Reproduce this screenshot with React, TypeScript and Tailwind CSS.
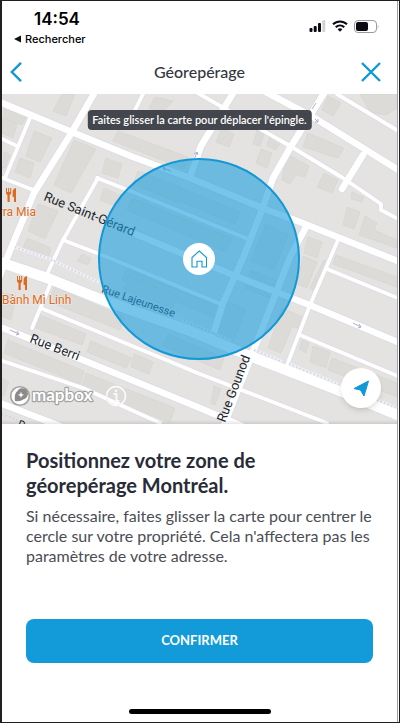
type Building = { points: string };

const minorRoads = [
    'M30 118 L5 178',
    'M0 138 L17 146',
    'M0 177 L36 191',
    'M98 178 L62 242 L48 272',
    'M50 285 L32 328',
    'M97 178 L133 192 L248 239',
    'M63 240 L107 257 L223 305',
    'M143 94 L134 112',
    'M337 94 L400 132',
    'M196 92 L290 146 L343 178 L381 204 L381 210 L400 220',
    'M338 240 L310 305 L287 365',
    'M327 269 L400 299',
    'M300 335 L400 377',
    'M43 309 L200 374 L327 423',
    'M0 360 L83 388 L160 423',
];

const mainRoads = [
    'M0 102 L67 130 L133 157 L190 178 L262 208 L300 222 L400 262',
    'M96 90 L72 132 L34 193 L7 258 L-4 285',
    'M133 233 L233 275 L312 306 L400 343',
    'M235 90 L201 146 L190 177',
    'M326 90 L290 148 L273 178 L262 210 L243 258 L223 303 L212 338',
    'M262 90 L313 117 L400 171',
    'M363 155 L342 189',
    'M306 227 L290 257 L253 352 L222 430',
    'M0 327 L33 340 L100 367 L200 408 L242 426',
    'M0 403 L60 426',
];

const avenue = 'M0 262 L50 279 L100 299 L190 331 L250 356 L340 391 L400 416';

const buildings: Building[] = [
    { points: '62,94 75,94 66,116 53,111' },
    { points: '14,108 28,113 22,125 4,118 4,108' },
    { points: '34,131 52,138 40,162 26,156' },
    { points: '20,158 34,163 30,178 15,172' },
    { points: '4,152 10,155 5,168 3,168' },
    { points: '2,117 17,124 13,138 2,133' },
    { points: '74,140 96,149 71,193 54,185' },
    { points: '38,204 58,211 45,239 28,231' },
    { points: '27,238 51,248 48,258 22,250' },
    { points: '106,158 122,164 118,178 102,173' },
    { points: '118,131 188,157 184,169 113,141' },
    { points: '104,188 122,196 118,207 100,200' },
    { points: '138,171 182,188 177,202 133,184' },
    { points: '181,188 240,212 235,224 177,200' },
    { points: '132,198 232,238 226,252 127,210' },
    { points: '155,97 173,101 163,112 149,108' },
    { points: '222,128 234,134 229,147 216,142' },
    { points: '258,127 265,132 260,146 253,144' },
    { points: '270,136 281,142 276,150 267,146' },
    { points: '261,149 272,153 267,168 256,163' },
    { points: '328,96 341,103 333,116 322,110' },
    { points: '360,94 397,94 397,108 386,115 370,112' },
    { points: '308,133 344,148 338,158 303,147' },
    { points: '287,154 309,166 305,177 296,175 290,184 282,180' },
    { points: '324,173 338,180 332,193 317,187' },
    { points: '352,192 364,197 362,202 351,199' },
    { points: '347,207 360,212 354,229 343,225' },
    { points: '365,216 377,223 374,230 397,240 397,248 359,235' },
    { points: '308,237 322,242 317,258 304,253' },
    { points: '303,256 317,262 307,288 297,284' },
    { points: '324,260 330,262 316,292 310,288' },
    { points: '336,255 397,277 397,287 333,264' },
    { points: '266,224 288,235 274,270 251,261' },
    { points: '225,300 246,310 232,344 218,335' },
    { points: '251,270 276,280 269,298 245,288' },
    { points: '282,308 303,317 298,328 292,327 281,353 268,348' },
    { points: '126,268 220,307 216,318 122,280' },
    { points: '128,276 178,297 172,308 124,290' },
    { points: '82,254 91,258 88,265 77,261' },
    { points: '0,292 16,296 11,320 0,315' },
    { points: '54,287 124,317 120,330 49,302' },
    { points: '40,315 86,334 82,345 36,328' },
    { points: '91,341 132,358 126,368 87,352' },
    { points: '134,354 153,362 149,374 131,367' },
    { points: '8,340 84,371 80,384 4,353' },
    { points: '86,373 175,408 170,422 80,390' },
    { points: '0,377 9,382 4,396 0,395' },
    { points: '168,334 224,358 220,370 163,346' },
    { points: '214,386 221,389 215,405 211,403' },
    { points: '302,340 309,343 306,353 299,349' },
    { points: '313,346 330,352 326,368 310,362' },
    { points: '332,358 397,383 397,397 328,370' },
];

function StatusBar() {
    return (
        <div className="flex justify-between items-start pl-3 pr-[18px] pt-2">
            <div className="flex flex-col font-['Inter'] text-black">
                <span className="text-[17px] leading-5 font-semibold pl-5">14:54</span>
                <a href="#rechercher" className="flex items-center gap-1 text-[11px] leading-5 font-medium">
                    <svg width="7" height="8" viewBox="0 0 7 8" aria-hidden="true">
                        <path d="M7 0.5 V7.5 L0 4 Z" fill="#111" />
                    </svg>
                    Rechercher
                </a>
            </div>
            <div className="flex items-center gap-[6px] pt-[10px]">
                <svg width="17" height="14" viewBox="0 0 17 14" aria-hidden="true">
                    <rect x="0.5" y="9" width="3" height="4" rx="1" fill="#0b0b14" />
                    <rect x="4.7" y="7" width="3" height="6" rx="1" fill="#0b0b14" />
                    <rect x="9" y="4" width="3" height="9" rx="1" fill="#0b0b14" />
                    <rect x="13.3" y="1" width="3" height="12" rx="1" fill="#d2d2d4" />
                </svg>
                <svg width="16" height="12" viewBox="0 0 16 12" fill="none" stroke="#0b0b14" aria-hidden="true">
                    <path d="M1 4.3 C5 0.4 11 0.4 15 4.3" strokeWidth="2" />
                    <path d="M3.7 7.2 C6.2 4.8 9.8 4.8 12.3 7.2" strokeWidth="2" />
                    <path d="M8 11.8 L5.6 9.3 Q8 7.3 10.4 9.3 Z" fill="#0b0b14" stroke="none" />
                </svg>
                <svg width="25" height="13" viewBox="0 0 25 13" aria-hidden="true">
                    <rect x="0.5" y="0.5" width="22" height="12" rx="3.5" fill="none" stroke="#9a9a9e" />
                    <rect x="2" y="2" width="12" height="9" rx="2" fill="#0b0b14" />
                    <path d="M23.8 4.5 Q25 6.5 23.8 8.5 Z" fill="#9a9a9e" />
                </svg>
            </div>
        </div>
    );
}

function Header() {
    return (
        <header className="grid grid-cols-[1fr_auto_1fr] items-center px-2 h-[45px]">
            <button type="button" aria-label="Retour" className="justify-self-start">
                <svg width="12" height="20" viewBox="0 0 12 20" fill="none" stroke="#1398d6" strokeWidth="2.4">
                    <path d="M11 0.8 L1.8 10 L11 19.2" />
                </svg>
            </button>
            <h1 className="text-[16px] leading-6 font-medium text-[#343741]">Géorepérage</h1>
            <button type="button" aria-label="Fermer" className="justify-self-end pr-2">
                <svg width="20" height="20" viewBox="0 0 20 20" fill="none" stroke="#1398d6" strokeWidth="2.4">
                    <path d="M1 1 L19 19 M19 1 L1 19" />
                </svg>
            </button>
        </header>
    );
}

function Fork({ x, y }: { x: number, y: number }) {
    return (
        <g transform={`translate(${x} ${y})`} fill="#dd6a22">
            <path d="M0 0 H1 V4 H2.1 V0 H3.1 V4 H4.2 V0 H5.2 V4.5 Q5.2 6.5 3.7 7 V14 H1.5 V7 Q0 6.5 0 4.5 Z" />
            <path d="M10 0 V14 H8 V9 H6.6 V4 Q6.8 0.6 10 0 Z" />
        </g>
    );
}

function StreetMap() {
    return (
        <svg viewBox="2 94 395 330" preserveAspectRatio="xMidYMid slice" className="w-full h-full" role="img" aria-label="Carte">
            <rect x="-200" y="0" width="800" height="600" fill="#e4e3e1" />
            <g fill="#dcdbd8" stroke="#d4d3d0" strokeWidth="0.6">
                {buildings.map((b) => <polygon key={b.points} points={b.points} />)}
            </g>

            {/* road casings first, then the white surfaces */}
            <g fill="none" stroke="#d9dbe6" strokeLinejoin="round" strokeLinecap="round">
                {minorRoads.map((d) => <path key={d} d={d} strokeWidth="5" />)}
                {mainRoads.map((d) => <path key={d} d={d} strokeWidth="8" />)}
                <path d={avenue} strokeWidth="12" />
            </g>
            <g fill="none" stroke="#fff" strokeLinejoin="round" strokeLinecap="round">
                {minorRoads.map((d) => <path key={d} d={d} strokeWidth="3.8" />)}
                {mainRoads.map((d) => <path key={d} d={d} strokeWidth="6.6" />)}
                <path d={avenue} strokeWidth="10.4" />
            </g>
            <g fill="none" stroke="#f0f1f6" strokeWidth="3">
                <path d="M15 247 L50 259 L100 283 M170 315 L232 341 M254 350 L283 362 M289 364 L397 408" />
            </g>
            <g fill="none" stroke="#ced1e0" strokeWidth="1.6" strokeDasharray="1.4 2.4">
                <path d="M15 247 L50 259 L100 283 M170 315 L232 341 M254 350 L283 362 M289 364 L397 408 M2 414 L22 422" />
            </g>
            <g fill="none" stroke="#a9aecb" strokeWidth="1">
                <path d="M10 330 L19 334 M17 331 L19 334 L16 335" />
                <path d="M353 323 L361 327 M359 324 L361 327 L358 328" />
                <path d="M171 171 L163 168 M165 167 L163 168 L165 171" />
                <path d="M194 160 L197 152 M194 154 L197 152 L198 155" />
                <path d="M312 109 L316 103 M315 119 L318 122 M318 119 V122 H315" />
            </g>

            <g className="font-['Roboto']" fontSize="13" fill="#22252c">
                <text transform="translate(43 200) rotate(22)">Rue Saint-Gérard</text>
                <text transform="translate(101 292) rotate(19)" fontSize="11">Rue Lajeunesse</text>
                <text transform="translate(29 342) rotate(21)">Rue Berri</text>
                <text transform="translate(225 423) rotate(-69)">Rue Gounod</text>
                <text transform="translate(17 427) rotate(20)" fontSize="11">R</text>
            </g>
            <g className="font-['Roboto']" fontSize="12" fill="#dd6a22" stroke="#f3f1ee" strokeWidth="1" paintOrder="stroke" strokeLinejoin="round">
                <text x="36" y="216" textAnchor="end">rra Mia</text>
                <text x="2" y="304">Bành Mì Linh</text>
            </g>
            <Fork x={6} y={188} />
            <Fork x={17} y={276} />

            <circle cx="199" cy="259" r="100" fill="#1d9fdd" fillOpacity="0.6" stroke="#1398d6" strokeWidth="2" />
            <circle cx="199" cy="259" r="16" fill="#fff" />
            <path d="M192 267 V257.5 L199.3 251 L206.5 257.5 V267 H202 V261.3 H197 V267 Z" fill="none" stroke="#1398d6" strokeWidth="1.1" />
        </svg>
    );
}

function MapSection() {
    return (
        <div className="relative h-[330px] overflow-hidden">
            <StreetMap />
            <p className="absolute top-4 left-1/2 -translate-x-1/2 whitespace-nowrap rounded bg-[#44464d] px-[5px] text-[11px] leading-5 font-semibold text-white">
                Faites glisser la carte pour déplacer l'épingle.
            </p>
            <div className="absolute bottom-[17px] left-[7px] flex items-center gap-2">
                <a href="#mapbox" aria-label="mapbox">
                    <svg width="88" height="22" viewBox="0 0 88 22">
                        <circle cx="11" cy="11" r="9.3" fill="#fff" stroke="#a3a3a3" strokeWidth="1.6" />
                        <path d="M6 16 Q5 8.5 8.3 6.2 A5.6 5.6 0 1 1 14.6 14.2 Q11.5 16.8 6 16 Z" fill="#8b8b8b" />
                        <path d="M12 6.8 L12.9 9 L15.1 9.9 L12.9 10.8 L12 13 L11.1 10.8 L8.9 9.9 L11.1 9 Z" fill="#fff" />
                        <text x="23" y="16" fontSize="17" fontWeight="700" className="font-['Lato']" fill="#fff" stroke="#a3a3a3" strokeWidth="2.4" paintOrder="stroke" strokeLinejoin="round">mapbox</text>
                    </svg>
                </a>
                <button type="button" aria-label="Informations">
                    <svg width="22" height="22" viewBox="0 0 22 22" fill="none" stroke="#f8f8f8" strokeWidth="1.8">
                        <circle cx="11" cy="11" r="9.5" />
                        <path d="M8.5 9 H11.5 V15.5 M8 16 H14.5" strokeWidth="2" />
                        <circle cx="11" cy="5.8" r="1.4" fill="#f8f8f8" stroke="none" />
                    </svg>
                </button>
            </div>
            <button type="button" aria-label="Ma position" className="absolute bottom-4 right-4 w-10 h-10 rounded-full bg-white shadow-md flex items-center justify-center">
                <svg width="17" height="17" viewBox="0 0 17 17">
                    <path d="M15.5 1 L1 8.6 L7.4 10 L11 16 Z" fill="#1398d6" stroke="#1398d6" strokeLinejoin="round" />
                </svg>
            </button>
            <div className="absolute inset-x-0 bottom-0 h-1 bg-linear-to-b from-transparent to-black/10"></div>
        </div>
    );
}

function App() {
    return (
        <div className="min-h-screen flex flex-col bg-white border border-l-2 border-[#231f20] font-['Lato',sans-serif]">
            <div className="flex-1 flex flex-col mr-px border-r border-gray-400">
                <StatusBar />
                <Header />
                <MapSection />
                <main className="flex-1 flex flex-col px-6 pt-6">
                    <h2 className="text-[20px] leading-[25px] font-bold text-[#292c37]">
                        Positionnez votre zone de<br />géorepérage Montréal.
                    </h2>
                    <p className="mt-2 text-[16px] leading-5 text-[#4b4d55]">
                        Si nécessaire, faites glisser la carte pour centrer le cercle sur votre propriété. Cela n'affectera pas les paramètres de votre adresse.
                    </p>
                    <button type="button" className="mt-auto h-11 rounded-lg bg-[#139bd9] text-[13px] font-bold text-white">
                        CONFIRMER
                    </button>
                </main>
                <div className="flex justify-center pt-[46px] pb-2">
                    <div className="w-[142px] h-[5px] rounded-full bg-black"></div>
                </div>
            </div>
        </div>
    );
}

export default App;
